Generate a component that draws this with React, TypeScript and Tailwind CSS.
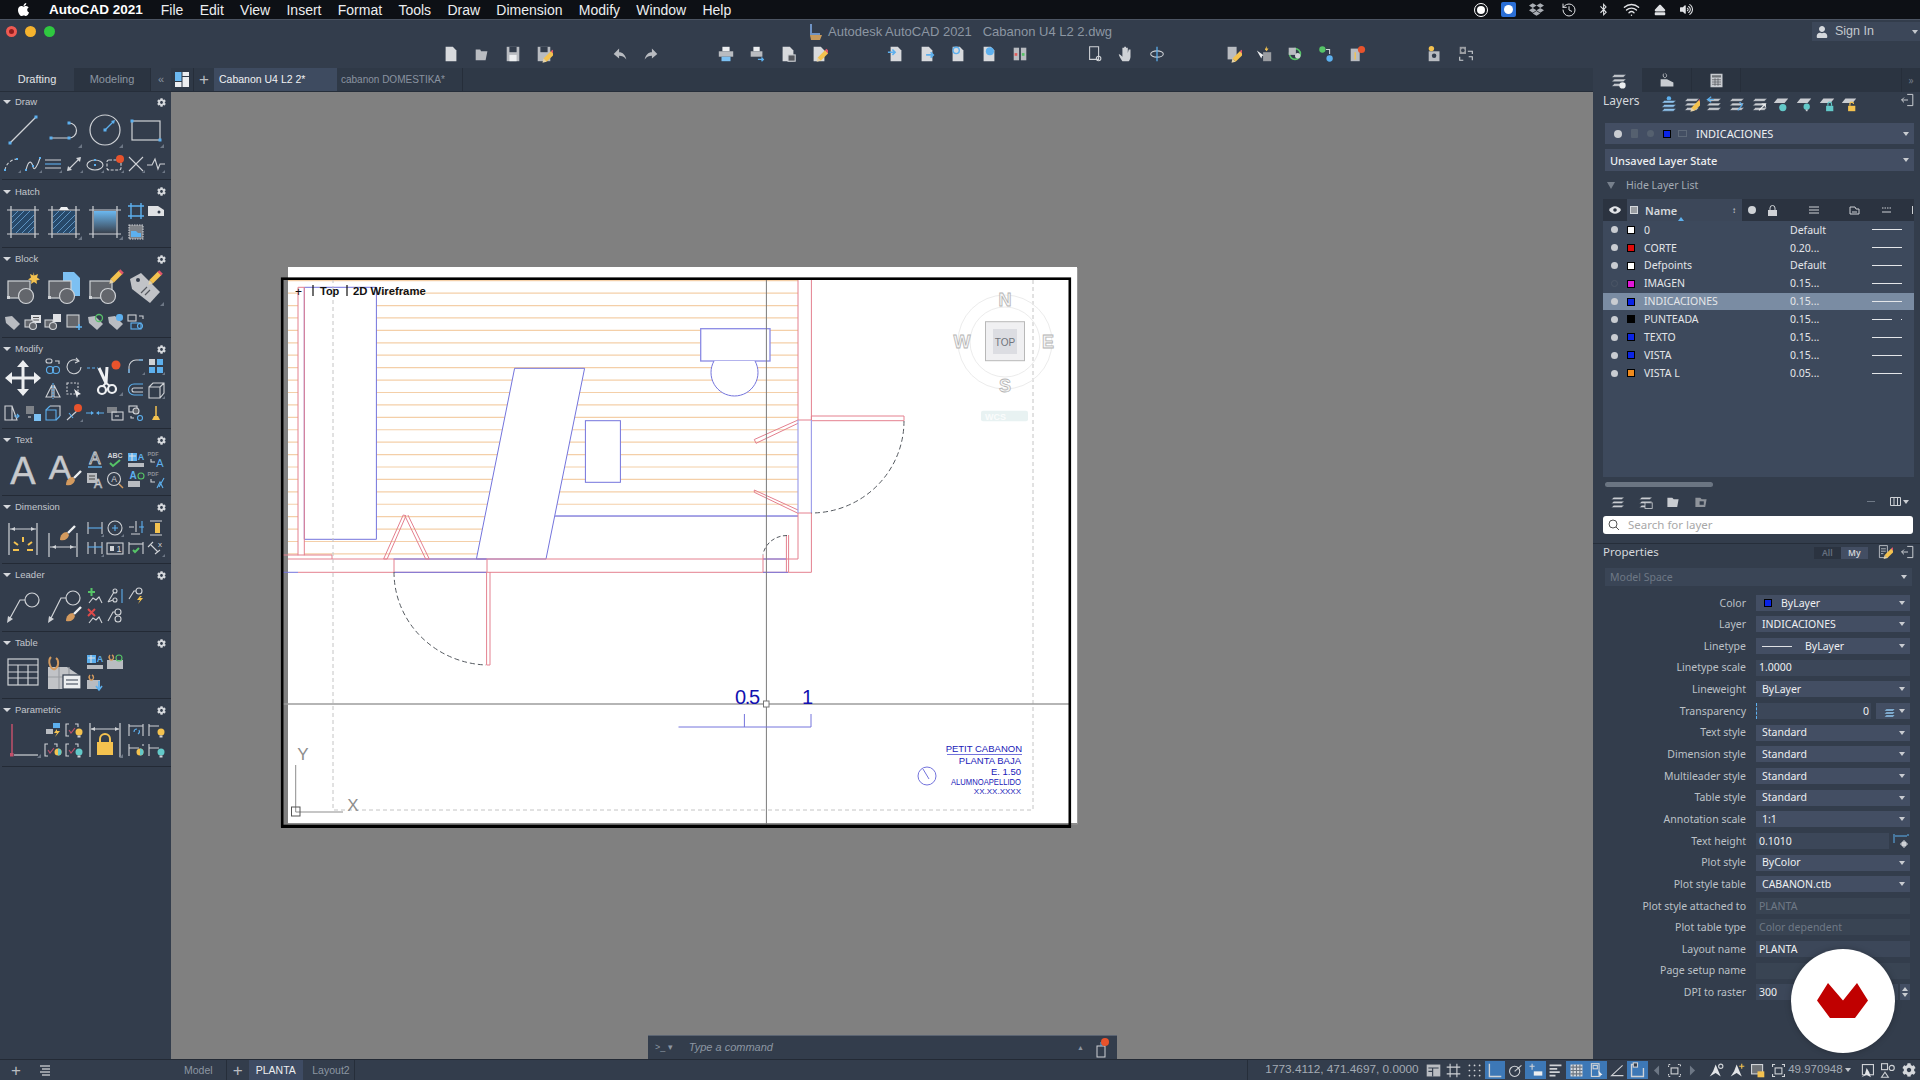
import React from 'react';
import { FaApple, FaDropbox, FaBluetoothB, FaEject, FaVolumeUp, FaCog, FaUser } from 'react-icons/fa';
import { History, Wifi } from 'lucide-react';

const W = '#cfd2d6';
const G = '#8b9098';
const B = '#5db0ee';
const R = '#e8532c';
const Y = '#f4c24f';
const O = '#d39a5e';

const dot = (x: number, y: number, s = 3) => <rect x={x - s / 2} y={y - s / 2} width={s} height={s} fill={B} stroke="none" />;
const badge = (x: number, y: number, r = 4) => <circle cx={x} cy={y} r={r} fill={R} stroke="none" />;

// 20px palette icon
const S = ({ children, f }: { children?: React.ReactNode; f?: boolean }) => (
  <span className="flex h-[20px] w-[20.6px] items-center justify-center">
    <svg width="20" height="20" viewBox="0 0 20 20" fill="none" stroke={W} strokeWidth="1.1" className="overflow-visible">
      {children}
      {f && <path d="M19 16v3h-3z" fill="#6d7785" stroke="none" />}
    </svg>
  </span>
);

// 36px palette icon
const L = ({ children, f, h = 'h-[36px]' }: { children?: React.ReactNode; f?: boolean; h?: string }) => (
  <span className={`flex w-[41.2px] items-center justify-center ${h}`}>
    <svg width="38" height="38" viewBox="0 0 38 38" fill="none" stroke={W} strokeWidth="1.2" className="overflow-visible">
      {children}
      {f && <path d="M37 33v4h-4z" fill="#6d7785" stroke="none" />}
    </svg>
  </span>
);

const Section = ({ title, h, head = 'h-[22px]', children }: { title: string; h: string; head?: string; children: React.ReactNode }) => (
  <section className={`border-b border-[#232a35] ${h}`}>
    <div className={`flex items-center pl-[1px] pr-[5px] ${head}`}>
      <span className="h-0 w-0 border-x-[4px] border-t-[4px] border-x-transparent border-t-[#d5d8dc]" />
      <span className="ml-[4px] text-[9.500px] leading-none text-[#c3c7cd]">{title}</span>
      <FaCog className="ml-auto text-[9px] text-[#d5d8dc]" />
    </div>
    {children}
  </section>
);

const Two = ({ children, cols = 'grid-cols-2 w-[41.2px]', gap = '' }: { children: React.ReactNode; cols?: string; gap?: string }) => (
  <div className={`grid ${cols} ${gap}`}>{children}</div>
);

const hatchSq = (
  <>
    <rect x="8" y="8" width="22" height="22" fill="#27496a" stroke="none" />
    <path d="M8 14l6-6M8 20l12-12M8 26l18-18M12 30l18-18M18 30l12-12M24 30l6-6" stroke="#5d92c0" strokeWidth="1" />
    <path d="M7 3v32M31 3v32M3 7h32M3 31h32" />
  </>
);

const blockBase = (
  <>
    <rect x="4" y="12" width="22" height="17" fill="#63666c" />
    <circle cx="22" cy="27" r="7.5" fill="#63666c" />
    <rect x="3" y="27" width="3" height="3" fill={W} stroke="none" />
  </>
);

const pencil = (x: number, y: number) => (
  <g transform={`translate(${x} ${y}) rotate(45)`}>
    <rect x="-2.5" y="-8" width="5" height="12" fill={Y} stroke="none" />
    <path d="M-2.5 4L0 8l2.5-4z" fill="#e6d3a8" stroke="none" />
    <rect x="-2.5" y="-10" width="5" height="2.5" fill="#e0566a" stroke="none" />
  </g>
);

const brush = (x: number, y: number) => (
  <g transform={`translate(${x} ${y})`}>
    <path d="M-7 7c0-5 3-8 7-8l2 3c-1 4-4 6-9 5z" fill={O} stroke="none" />
    <path d="M1 0l7-7" stroke="#eef0f2" strokeWidth="2.4" />
  </g>
);

const tag = (
  <path d="M3 5l7-1 8 8-6 6-8-7z" fill="#b9bcc1" stroke="none" />
);

const dimBars = <path d="M3 4v12M17 4v12" />;

const lamp = (c: string) => (
  <g>
    <circle cx="15" cy="12" r="3.5" fill={c} stroke="none" />
    <rect x="13.5" y="15.5" width="3" height="2" fill="#cfd2d6" stroke="none" />
  </g>
);

const geoBracket = (
  <>
    <path d="M5 4H2v12h3M11 4h3v3" />
    <path d="M5 10l2 3 4-5" stroke="#c2506a" />
  </>
);

const LeftPalette = () => (
  <div className="flex-1 pl-[2px]">
    <Section title="Draw" h="h-[88px]" head="h-[20px]">
      <div className="flex">
        <L>
          <line x1="6" y1="32" x2="32" y2="6" />
          {dot(6, 32)}
          {dot(32, 6)}
        </L>
        <L f>
          <path d="M6 27h18M24 27a7.500 7.500 0 0 0 0-15" />
          {dot(6, 27)}
          {dot(24, 27)}
          {dot(24, 12)}
        </L>
        <L f>
          <circle cx="19" cy="19" r="15" />
          <path d="M19 19l8-8" stroke={B} />
          {dot(19, 19)}
          <path d="M29 9l-4 1 3 3z" fill={B} stroke="none" />
        </L>
        <L f>
          <rect x="5" y="10" width="28" height="19" />
          {dot(5, 10)}
          {dot(33, 29)}
        </L>
      </div>
      <div className="mt-[6px] flex">
        <S f>
          <path d="M3 16a13 13 0 0 1 12-11" strokeDasharray="3 2" />
          {dot(3, 16, 2)}
          {dot(15, 5, 2)}
        </S>
        <S f>
          <path d="M3 16c3-12 6-8 7-3s5-2 7-9" />
          {dot(3, 16, 2)}
          {dot(10, 12, 2)}
          {dot(17, 4, 2)}
        </S>
        <S f>
          <path d="M2 6h16M2 14h16" />
          <path d="M2 10h16" stroke={B} />
        </S>
        <S f>
          <path d="M4 16L16 4" />
          <path d="M17 3l-5 1 4 4zM3 17l5-1-4-4z" fill={W} stroke="none" />
        </S>
        <S f>
          <ellipse cx="10" cy="11" rx="8" ry="5" />
          {dot(10, 6, 2)}
          {dot(10, 11, 2)}
        </S>
        <S f>
          <rect x="2" y="6" width="14" height="10" rx="2" strokeDasharray="3 1.500" />
          {badge(15, 5)}
        </S>
        <S f>
          <path d="M3 3l14 14M17 3L3 17" />
        </S>
        <S f>
          <path d="M1 11h5l3-6 3 10 2-5h5" />
        </S>
      </div>
    </Section>

    <Section title="Hatch" h="h-[68px]" head="h-[23px]">
      <div className="-mt-[2px] flex">
        <L h="h-[41px]">{hatchSq}</L>
        <L f h="h-[41px]">
          {hatchSq}
          <path d="M14 7l2-3h6l2 3z" fill="#eef0f2" stroke="none" />
        </L>
        <L f h="h-[41px]">
          <defs>
            <linearGradient id="grad" x1="0" y1="0" x2="0" y2="1">
              <stop offset="0" stopColor="#6bb8f0" />
              <stop offset="1" stopColor="#3a4350" />
            </linearGradient>
          </defs>
          <rect x="8" y="8" width="22" height="22" fill="url(#grad)" stroke="none" />
          <path d="M7 3v32M31 3v32M3 7h32M3 31h32" />
        </L>
        <Two gap="gap-y-[1px]">
          <S>
            <path d="M5 2v16M15 2v16M2 5h16M2 15h16" stroke={B} strokeWidth="1.4" />
          </S>
          <S>
            <path d="M2 5h10l6 4v6H2z" fill="#dfe1e4" stroke="none" />
            <circle cx="13" cy="11" r="1.500" fill="#333d4c" stroke="none" />
          </S>
          <S>
            <rect x="3" y="3" width="14" height="14" fill="#7e8288" stroke={W} strokeDasharray="1.500 1" />
            <path d="M5 9h5l2 2h3v4H5z" fill={B} stroke="none" />
          </S>
        </Two>
      </div>
    </Section>

    <Section title="Block" h="h-[90px]">
      <div className="flex">
        <L>
          {blockBase}
          <path d="M29 3l1.500 3.500 3.500-1.500-1 3.500 3 2-3.500 1 .5 3.500-3-2-3 2 .5-3.500-3.500-1 3-2-1-3.500 3.500 1.500z" fill={Y} stroke="none" />
        </L>
        <L>
          <path d="M18 3h11l6 6v18H18z" fill="#7cc0f2" stroke="none" />
          {blockBase}
        </L>
        <L>
          {blockBase}
          {pencil(29, 9)}
        </L>
        <L f>
          <path d="M3 10l11-6 19 19-10 11L5 20z" fill="#c1c3c7" stroke="none" />
          <circle cx="11" cy="11" r="2" fill="#333d4c" stroke="none" />
          <path d="M14 24l6-6M18 26l5-5" stroke="#55585e" />
          {pencil(27, 10)}
        </L>
      </div>
      <div className="mt-[6px] flex">
        <S>{tag}</S>
        <S>
          <rect x="8" y="3" width="10" height="8" fill="#dfe1e4" stroke="none" />
          <path d="M10 5.500h6M10 8h6" stroke="#555" />
          <rect x="2" y="8" width="8" height="7" fill="#63666c" />
          <circle cx="10" cy="14" r="3.500" fill="#63666c" />
        </S>
        <S>
          <rect x="10" y="2" width="8" height="8" fill="#dfe1e4" stroke="none" />
          <rect x="2" y="8" width="8" height="7" fill="#63666c" />
          <circle cx="10" cy="14" r="3.500" fill="#63666c" />
        </S>
        <S>
          <rect x="3" y="3" width="12" height="12" fill="#63666c" />
          <path d="M15 12v6M12 15h6" stroke={B} strokeWidth="1.600" />
        </S>
        <S>
          {tag}
          <circle cx="14" cy="6" r="3.500" stroke="#59c06a" strokeWidth="1.300" />
        </S>
        <S>
          {tag}
          <rect x="11" y="2" width="7" height="7" rx="3" fill={B} stroke="none" />
        </S>
        <S>
          <rect x="2" y="3" width="8" height="6" />
          <path d="M13 4h4v3" />
          <rect x="5" y="11" width="10" height="6" stroke={B} />
          <circle cx="14" cy="14" r="2.500" stroke={B} />
        </S>
      </div>
    </Section>

    <Section title="Modify" h="h-[91px]">
      <div className="-mt-[4px] flex">
        <L h="h-[44px]">
          <path d="M19 4v30M4 19h30" strokeWidth="3" stroke="#eceef0" />
          <path d="M19 1l6 7H13zM19 37l6-7H13zM1 19l7-6v12zM37 19l-7-6v12z" fill="#eceef0" stroke="none" />
        </L>
        <Two gap="gap-y-[4px]">
          <S>
            <rect x="3" y="3" width="6" height="4" rx="2" />
            <path d="M12 5h4v3" />
            <circle cx="7" cy="14" r="3.500" stroke={B} />
            <circle cx="13" cy="14" r="3.500" stroke={B} />
          </S>
          <S>
            <path d="M14 5a7 7 0 1 0 3 6" />
            <path d="M12 2l3 3-4 2" />
          </S>
          <S>
            <path d="M3 17L9 5v12zM11 5l6 12h-6z" />
            <path d="M10 3v16" strokeDasharray="2 1" stroke={B} />
          </S>
          <S>
            <rect x="3" y="3" width="11" height="11" strokeDasharray="2 1.500" />
            <path d="M10 9l7 5-3 1-1 3z" fill="#eceef0" stroke="none" />
          </S>
        </Two>
        <L f h="h-[44px]">
          <path d="M1 9h11" strokeDasharray="3 2" stroke={B} />
          <path d="M13 9l7 15M21 8l-1 16" stroke="#eef0f2" strokeWidth="3" />
          <circle cx="16" cy="31" r="4" stroke="#eef0f2" strokeWidth="2.200" />
          <circle cx="26" cy="30" r="4" stroke="#eef0f2" strokeWidth="2.200" />
          <path d="M20 24l-3 3M20 24l4 3" stroke="#eef0f2" strokeWidth="2" />
          {badge(30, 6, 4.500)}
        </L>
        <Two gap="gap-y-[4px]">
          <S f>
            <path d="M3 17V11a7 7 0 0 1 7-7h7" />
            <path d="M3 17V13M13 4h4" stroke={B} />
          </S>
          <S f>
            <rect x="3" y="3" width="6" height="6" fill={W} stroke="none" />
            <rect x="11" y="3" width="6" height="6" fill={B} stroke="none" />
            <rect x="3" y="11" width="6" height="6" fill={B} stroke="none" />
            <rect x="11" y="11" width="6" height="6" fill={B} stroke="none" />
          </S>
          <S>
            <path d="M17 4H8a5 5 0 0 0 0 11h9" stroke={B} />
            <path d="M17 8H8a2 2 0 0 0 0 4h9" />
          </S>
          <S f>
            <path d="M3 7h11v11H3zM3 7l4-4h11v10l-4 5M14 7l4-4" />
          </S>
        </Two>
      </div>
      <div className="mt-[3px] flex">
        <S>
          <path d="M3 3h7v14H3zM10 3l5 14H10" />
          <path d="M12 13h5m-2-2l2 2-2 2" stroke={B} />
        </S>
        <S>
          <rect x="3" y="3" width="8" height="8" fill="#7e8288" stroke="none" />
          <path d="M5 14h3" />
          <rect x="11" y="11" width="7" height="7" fill="#7cc0f2" stroke="none" />
        </S>
        <S>
          <path d="M3 7h10v10H3z" stroke={B} />
          <path d="M7 3h10v10" />
          <path d="M3 7l4-4M13 17l4-4" stroke={B} />
        </S>
        <S f>
          <path d="M3 17L14 7" />
          <path d="M5 10l4 5" stroke={B} />
          {badge(14, 5, 4)}
        </S>
        <S>
          <path d="M1 10h6M13 10h6" stroke={B} />
          <path d="M6 8l3 2-3 2zM14 8l-3 2 3 2z" fill={B} stroke="none" />
        </S>
        <S>
          <rect x="2" y="4" width="10" height="6" fill="#7e8288" stroke="none" />
          <rect x="7" y="9" width="11" height="8" />
          <path d="M10 13h4" />
        </S>
        <S>
          <rect x="3" y="3" width="8" height="6" />
          <circle cx="10" cy="8" r="3" fill="#63666c" />
          <path d="M5 13v2h3" />
          <circle cx="14" cy="15" r="2.500" stroke={B} />
        </S>
        <S>
          <path d="M10 3v10" stroke={Y} strokeWidth="1.500" />
          <path d="M6 17l2-4h4l2 4z" fill={Y} stroke="none" />
        </S>
      </div>
    </Section>

    <Section title="Text" h="h-[67px]">
      <div className="-mt-[1px] flex">
        <L h="h-[40px]">
          <text x="19" y="33" textAnchor="middle" fontSize="38" fill="#c7c9cc" stroke="#c7c9cc" strokeWidth=".5" fontFamily="Liberation Sans, sans-serif">A</text>
        </L>
        <L h="h-[40px]">
          <text x="15" y="28" textAnchor="middle" fontSize="34" fill="#c7c9cc" stroke="#c7c9cc" strokeWidth=".5" fontFamily="Liberation Sans, sans-serif">A</text>
          {brush(28, 27)}
        </L>
        <Two cols="grid-cols-4 w-[82.4px]">
          <S>
            <text x="10" y="14" textAnchor="middle" fontSize="17" fill="none" stroke={W} strokeWidth=".8" fontFamily="Liberation Sans, sans-serif">A</text>
            <path d="M3 17h14" stroke={B} strokeWidth="1.400" />
          </S>
          <S>
            <text x="10" y="8" textAnchor="middle" fontSize="7" fontWeight="bold" fill={W} stroke="none" fontFamily="Liberation Sans, sans-serif">ABC</text>
            <path d="M5 13l3 3 7-6" stroke="#56c467" strokeWidth="2" />
          </S>
          <S>
            <rect x="2" y="3" width="9" height="8" fill={B} stroke="none" />
            <path d="M3 6h7M6 3v8" stroke="#dfe1e4" />
            <text x="15" y="10" textAnchor="middle" fontSize="9" fill={B} stroke="none" fontWeight="bold" fontFamily="Liberation Sans, sans-serif">A</text>
            <rect x="2" y="13" width="16" height="4" fill="#b9bcc1" stroke="none" />
          </S>
          <S>
            <text x="7" y="6" textAnchor="middle" fontSize="5.500" fontWeight="bold" fill={G} stroke="none" fontFamily="Liberation Sans, sans-serif">PDF</text>
            <path d="M5 9v3h4" />
            <text x="14" y="17" textAnchor="middle" fontSize="11" fill={B} stroke="none" fontFamily="Liberation Sans, sans-serif">A</text>
          </S>
          <S>
            <rect x="2" y="3" width="10" height="10" fill="#b9bcc1" stroke="none" />
            <path d="M4 6h6M4 9h6" stroke="#444" />
            <text x="13" y="18" textAnchor="middle" fontSize="12" fill="#333d4c" stroke={W} strokeWidth=".7" fontFamily="Liberation Sans, sans-serif">A</text>
          </S>
          <S>
            <circle cx="9" cy="9" r="6.500" />
            <text x="9" y="12" textAnchor="middle" fontSize="8.500" fill={W} stroke="none" fontFamily="Liberation Sans, sans-serif">A</text>
            <path d="M14 14l4 4" stroke={O} strokeWidth="1.500" />
          </S>
          <S>
            <text x="7" y="9" textAnchor="middle" fontSize="10" fill={B} stroke="none" fontWeight="bold" fontFamily="Liberation Sans, sans-serif">A</text>
            <circle cx="15" cy="6" r="3" stroke="#56c467" />
            <rect x="2" y="11" width="12" height="6" fill="#b9bcc1" stroke="none" />
          </S>
          <S>
            <text x="7" y="6" textAnchor="middle" fontSize="5.500" fontWeight="bold" fill={G} stroke="none" fontFamily="Liberation Sans, sans-serif">PDF</text>
            <path d="M5 9v3h4" />
            <path d="M11 18l3-6 3 6M18 8l-5 9" stroke={B} />
          </S>
        </Two>
      </div>
    </Section>

    <Section title="Dimension" h="h-[68px]">
      <div className="flex">
        <L h="h-[40px]">
          <path d="M5 4v32M33 4v32M6 10h26" />
          <path d="M7 10l4-2v4zM31 10l-4-2v4z" fill={W} stroke="none" />
          <path d="M19 18v5M10 23l4 3M28 23l-4 3M9 31h6M23 31h6" stroke={Y} strokeWidth="2" />
        </L>
        <L h="h-[40px]">
          <path d="M4 14v24M32 14v24M5 28h26" />
          <path d="M7 28l4-2v4zM29 28l-4-2v4z" fill={W} stroke="none" />
          {brush(22, 14)}
        </L>
        <Two cols="grid-cols-4 w-[82.4px]">
          <S f>
            {dimBars}
            <path d="M3 10h14" stroke={B} />
          </S>
          <S f>
            <circle cx="10" cy="10" r="7" />
            <path d="M7 10h6M10 7v6" stroke={B} />
          </S>
          <S>
            <path d="M10 3v11M5 16h9M3 9h5" />
            <path d="M13 9h5M16 3v12" stroke={B} />
          </S>
          <S>
            <path d="M4 3h12M4 17h12" />
            <rect x="9" y="5" width="5" height="10" fill={Y} stroke="none" />
          </S>
          <S f>
            <path d="M3 4v12M10 4v12M17 4v12" />
            <path d="M3 9h14" stroke={B} />
          </S>
          <S>
            <rect x="2" y="5" width="16" height="11" />
            <path d="M5 8h4v5H5z" fill={W} stroke="none" />
            <text x="14" y="14" textAnchor="middle" fontSize="9" fill={W} stroke="none" fontFamily="Liberation Sans, sans-serif">1</text>
          </S>
          <S>
            {dimBars}
            <path d="M3 6h14" />
            <path d="M7 12l2 2 4-4" stroke="#56c467" strokeWidth="2" />
          </S>
          <S f>
            <path d="M2 9l5-5M9 16l5-4M5 7l7 7" />
            <text x="14" y="9" textAnchor="middle" fontSize="8" fill={W} stroke="none" fontFamily="Liberation Sans, sans-serif">x</text>
          </S>
        </Two>
      </div>
    </Section>

    <Section title="Leader" h="h-[68px]">
      <div className="flex">
        <L h="h-[40px]">
          <circle cx="28" cy="13" r="7" />
          <path d="M21 13h-5L5 33" />
          <path d="M3 36l1-7 5 3z" fill={W} stroke="none" />
        </L>
        <L h="h-[40px]">
          <circle cx="28" cy="11" r="7" />
          <path d="M21 11h-5L5 33" />
          <path d="M3 36l1-7 5 3z" fill={W} stroke="none" />
          {brush(28, 27)}
        </L>
        <Two cols="grid-cols-3 w-[61.8px]">
          <S>
            <path d="M3 6h7M6.500 2v8" stroke="#56c467" strokeWidth="2" />
            <path d="M4 17l4-5 3 2 3-3 3 6" />
          </S>
          <S>
            <path d="M17 3v14" stroke={B} />
            <circle cx="10" cy="5" r="2" />
            <circle cx="10" cy="14" r="2" />
            <path d="M3 16l6-10M3 16l5-2" />
          </S>
          <S>
            <circle cx="13" cy="5" r="3" />
            <path d="M10 5H8L3 13" />
            <path d="M14 10l-3 4h3l-2 4 5-6h-3l2-2z" fill={Y} stroke="none" />
          </S>
          <S>
            <path d="M3 3l7 7M10 3l-7 7" stroke="#dd4a4a" strokeWidth="2" />
            <path d="M4 17l4-5 3 2 3-3 3 6" />
          </S>
          <S>
            <circle cx="13" cy="6" r="3" />
            <circle cx="13" cy="13" r="3" />
            <path d="M10 6H8L3 15" />
          </S>
        </Two>
      </div>
    </Section>

    <Section title="Table" h="h-[67px]">
      <div className="-mt-[2px] flex">
        <L h="h-[40px]">
          <rect x="4" y="6" width="30" height="26" />
          <path d="M4 12h30M4 19h30M4 25h30M14 12v20M24 12v20" />
        </L>
        <L h="h-[40px]">
          <path d="M3 14l19 0 12 8v14H3z" fill="#c1c3c7" stroke="none" />
          <path d="M14 14v22M24 14v22M3 24h31" stroke="#9a9da2" />
          <path d="M6 4c-4 4 0 14 4 12s4-9 1-11" stroke={O} strokeWidth="2" />
          <rect x="18" y="22" width="18" height="14" fill="#eceef0" stroke="#333d4c" />
          <path d="M21 27h12M21 31h12" stroke="#333d4c" />
        </L>
        <Two cols="grid-cols-2 w-[41.2px]">
          <S>
            <rect x="2" y="3" width="9" height="8" fill={B} stroke="none" />
            <path d="M3 6h7M6 3v8" stroke="#dfe1e4" />
            <text x="15" y="10" textAnchor="middle" fontSize="9" fill={B} stroke="none" fontWeight="bold" fontFamily="Liberation Sans, sans-serif">A</text>
            <rect x="2" y="13" width="16" height="4" fill="#b9bcc1" stroke="none" />
          </S>
          <S>
            <path d="M2 8h16v9H2z" fill="#b9bcc1" stroke="none" />
            <path d="M5 3c-2 2 0 6 2 5s2-4 0-5" stroke={O} strokeWidth="1.400" />
            <circle cx="14" cy="6" r="3" stroke="#56c467" />
          </S>
          <S>
            <path d="M2 8h13v9H2z" fill="#b9bcc1" stroke="none" />
            <path d="M5 3c-2 2 0 6 2 5s2-4 0-5" stroke={O} strokeWidth="1.400" />
            <path d="M14 9v8m-3-3l3 4 3-4" stroke={B} strokeWidth="1.600" />
          </S>
        </Two>
      </div>
    </Section>

    <Section title="Parametric" h="h-[68px]">
      <div className="-mt-[1px] flex">
        <L f h="h-[40px]">
          <path d="M8 3v30" stroke="#c2506a" strokeWidth="1.500" />
          <path d="M10 34h24" />
          <rect x="6" y="32" width="3.500" height="3.500" fill="#c2506a" stroke="none" />
        </L>
        <Two gap="gap-y-0">
          <S>
            <rect x="10" y="3" width="7" height="5" fill={B} stroke="none" />
            <rect x="3" y="9" width="7" height="5" fill="#b9bcc1" stroke="none" />
            <path d="M14 9l-3 4h3l-2 4 5-6h-3z" fill={Y} stroke="none" />
          </S>
          <S>
            {geoBracket}
            {lamp(Y)}
          </S>
          <S>
            {geoBracket}
            <circle cx="15" cy="12" r="3.500" fill={Y} stroke="none" />
            <path d="M15 8.500a3.500 3.500 0 0 1 0 7z" fill="#63c9c9" stroke="none" />
          </S>
          <S>
            {geoBracket}
            {lamp('#63c9c9')}
          </S>
        </Two>
        <L f h="h-[40px]">
          <path d="M4 2v34M34 2v34M5 8h28" />
          <path d="M5 8l4-2v4zM33 8l-4-2v4z" fill={W} stroke="none" />
          <path d="M14 21v-3a5 5 0 0 1 10 0v3" stroke={Y} strokeWidth="2" />
          <rect x="11" y="21" width="16" height="13" fill={Y} stroke="none" />
        </L>
        <Two>
          <S>
            <path d="M3 4v12M17 4v12M3 6h14" />
            <path d="M8 12a3 3 0 0 1 3-3M12 14a3 3 0 0 0 1-4" stroke={B} />
          </S>
          <S>
            <path d="M3 4v12M3 6h10" />
            {lamp(Y)}
          </S>
          <S>
            <path d="M3 4v12M3 8h10M17 4v2" />
            <circle cx="14" cy="12" r="3.500" fill={Y} stroke="none" />
            <path d="M14 8.500a3.500 3.500 0 0 1 0 7z" fill="#63c9c9" stroke="none" />
          </S>
          <S>
            <path d="M3 4v12M3 8h10" />
            {lamp('#63c9c9')}
          </S>
        </Two>
      </div>
    </Section>
  </div>
);

const MenuBar = () => (
  <div className="flex h-[19px] shrink-0 items-center bg-[#0d1015] text-[14px] leading-none text-[#eceef0]">
    <FaApple className="ml-[16px] mr-[18px] text-[15px] text-white" />
    <span className="mr-[18px] text-[13.500px] font-bold text-white">AutoCAD 2021</span>
    <div className="flex gap-[16.300px]">
      {['File', 'Edit', 'View', 'Insert', 'Format', 'Tools', 'Draw', 'Dimension', 'Modify', 'Window', 'Help'].map((m) => (
        <span key={m}>{m}</span>
      ))}
    </div>
    <div className="ml-[743px] flex items-center gap-[13px] text-[#dfe1e4]">
      <span className="flex h-[14px] w-[14px] items-center justify-center rounded-full border border-white">
        <span className="h-[8px] w-[8px] rounded-full bg-white" />
      </span>
      <span className="flex h-[15px] w-[15px] items-center justify-center rounded-[2px] bg-[#2b6fd6]">
        <span className="h-[9px] w-[9px] rounded-full bg-white" />
      </span>
      <FaDropbox className="text-[15px] text-[#a9adb3]" />
      <History size={16} strokeWidth={1.500} className="ml-[4px]" />
      <FaBluetoothB className="ml-[7px] text-[13px]" />
      <Wifi size={17} />
      <FaEject className="ml-[1px] text-[12px]" />
      <FaVolumeUp className="ml-[1px] text-[13px]" />
    </div>
  </div>
);

const T = ({ children }: { children: React.ReactNode }) => (
  <span className="flex h-[20px] w-[31px] items-center justify-center">
    <svg width="18" height="18" viewBox="0 0 20 20" fill="none" stroke={W} strokeWidth="1.200">
      {children}
    </svg>
  </span>
);

const docPath = <path d="M4 2h8l4 4v12H4z" fill="#d8dadd" stroke="none" />;

const TitleBar = () => (
  <div className="h-[49px] shrink-0 bg-[#333d4c]">
    <div className="flex h-[24px] items-center border-t border-[#4c5563]">
      <div className="ml-[6px] flex gap-[8px]">
        <span className="h-[11px] w-[11px] rounded-full border-[3px] border-[#ef5a52] bg-[#8f1d1d]" />
        <span className="h-[11px] w-[11px] rounded-full bg-[#f5b32e]" />
        <span className="h-[11px] w-[11px] rounded-full bg-[#2fc840]" />
      </div>
      <svg width="14" height="18" viewBox="0 0 14 18" className="ml-[754px]">
        <path d="M2 1v10l9 0" stroke="#6f93c4" strokeWidth="2" fill="none" />
        <path d="M1 12h12l-2 5H2z" fill="#c79a5d" />
      </svg>
      <span className="ml-[5px] text-[13px] leading-none text-[#8c96a2]">Autodesk AutoCAD 2021&nbsp;&nbsp;&nbsp;Cabanon U4 L2 2.dwg</span>
      <div className="ml-auto flex h-[19px] w-[108px] items-center bg-[#3c4759] pl-[4px] text-[12.500px] leading-none text-[#c3c7cd]">
        <FaUser className="text-[12px] text-[#d5d8dc]" />
        <span className="ml-[7px]">Sign In</span>
        <span className="ml-auto mr-[2px] h-0 w-0 border-x-[3px] border-t-[4px] border-x-transparent border-t-[#c3c7cd]" />
      </div>
    </div>
    <div className="-mt-[2px] flex h-[25px] items-center pl-[435px]">
      <T>{docPath}</T>
      <T>
        <path d="M3 5h5l1 2h7l-2 10H3z" fill="#b9bcc1" stroke="none" />
      </T>
      <T>
        <path d="M3 2h14v16H3z" fill="#b9bcc1" stroke="none" />
        <rect x="6" y="2" width="8" height="6" fill="#333d4c" stroke="none" />
        <rect x="6" y="11" width="8" height="7" fill="#eceef0" stroke="none" />
      </T>
      <T>
        <path d="M3 2h14v16H3z" fill="#b9bcc1" stroke="none" />
        <rect x="6" y="2" width="8" height="6" fill="#333d4c" stroke="none" />
        {pencil(14, 14)}
      </T>
      <span className="ml-[45px]" />
      <T>
        <path d="M9 4L3 10l6 5v-3c3 0 6 1 8 4-1-5-4-8-8-8z" fill="#b9bcc1" stroke="none" />
      </T>
      <T>
        <path d="M11 4l6 6-6 5v-3c-3 0-6 1-8 4 1-5 4-8 8-8z" fill="#b9bcc1" stroke="none" />
      </T>
      <span className="ml-[44px]" />
      <T>
        <rect x="6" y="2" width="8" height="5" fill="#eceef0" stroke="none" />
        <rect x="2" y="7" width="16" height="6" fill="#b9bcc1" stroke="none" />
        <rect x="5" y="13" width="10" height="5" fill="#7cc0f2" stroke="none" />
      </T>
      <T>
        <rect x="6" y="2" width="7" height="5" fill="#eceef0" stroke="none" />
        <rect x="3" y="7" width="13" height="6" fill="#b9bcc1" stroke="none" />
        <path d="M11 16h6m-2-2l2 2-2 2" stroke={B} strokeWidth="1.500" />
      </T>
      <T>
        {docPath}
        <rect x="10" y="11" width="8" height="7" fill="#55585e" stroke={W} />
      </T>
      <T>
        {docPath}
        {pencil(13, 13)}
      </T>
      <span className="ml-[46px]" />
      <T>
        {docPath}
        <path d="M1 8h8m-3-3l3 3-3 3" stroke={B} strokeWidth="1.800" />
      </T>
      <T>
        {docPath}
        <path d="M9 11h8m-3-3l3 3-3 3" stroke={B} strokeWidth="1.800" />
      </T>
      <T>
        {docPath}
        <circle cx="8" cy="6" r="3.500" stroke={B} strokeWidth="1.500" />
      </T>
      <T>
        {docPath}
        <circle cx="11" cy="7" r="4.500" fill={B} stroke="none" />
      </T>
      <T>
        <rect x="3" y="3" width="6" height="14" fill="#b9bcc1" stroke="none" />
        <rect x="11" y="3" width="6" height="14" fill="#b9bcc1" stroke="none" />
        <rect x="4" y="9" width="3" height="3" fill="#e25b5b" stroke="none" />
        <rect x="12" y="9" width="3" height="3" fill="#56c467" stroke="none" />
      </T>
      <span className="ml-[44px]" />
      <T>
        <path d="M4 2h10v14H4z" />
        <circle cx="14" cy="15" r="2.500" />
      </T>
      <T>
        <path d="M6 18c-2-3-4-6-4-8l2 1 2 2V3h2v6V2h2v7V3h2v6l1-4h2v8c0 2-1 4-2 5z" fill="#cfd2d6" stroke="none" />
      </T>
      <T>
        <ellipse cx="10" cy="10" rx="7" ry="3.500" />
        <path d="M10 2v16" stroke={B} strokeWidth="1.400" />
      </T>
      <span className="ml-[45px]" />
      <T>
        <path d="M4 2h10v14H4z" fill="#b9bcc1" stroke="none" />
        {pencil(14, 14)}
      </T>
      <T>
        <path d="M2 6l5 9 1-3 4 1z" fill="#eceef0" stroke="none" />
        <rect x="9" y="8" width="9" height="10" fill="#9a9da2" stroke="none" />
        <path d="M11 5l2-4v3h2l-2 3z" fill={Y} stroke="none" />
      </T>
      <T>
        <circle cx="10" cy="10" r="6" stroke="#56c467" strokeWidth="1.800" />
        <rect x="3" y="3" width="8" height="8" fill="#b9bcc1" stroke="none" />
        <circle cx="13" cy="12" r="3" fill={W} stroke="none" />
      </T>
      <T>
        <circle cx="6" cy="5" r="3.500" fill="#56c467" stroke="none" />
        <circle cx="14" cy="15" r="3.500" fill={B} stroke="none" />
        <path d="M10 5h4v5" stroke={W} />
      </T>
      <T>
        <rect x="3" y="4" width="10" height="14" fill="#b9bcc1" stroke="none" />
        <path d="M8 8v8" stroke={Y} strokeWidth="1.500" />
        {badge(15, 5, 4)}
      </T>
      <span className="ml-[47px]" />
      <T>
        <rect x="3" y="7" width="12" height="11" fill="#b9bcc1" stroke="none" />
        <circle cx="9" cy="12" r="2.500" fill="#333d4c" stroke="none" />
        <circle cx="6" cy="4" r="3" fill={Y} stroke="none" />
      </T>
      <T>
        <rect x="3" y="2" width="7" height="8" fill="#9a9da2" stroke="none" />
        <circle cx="6.500" cy="6" r="2" fill="#333d4c" stroke="none" />
        <path d="M3 13v4h4M13 13h4v4M12 7h5v3" stroke={W} />
      </T>
    </div>
  </div>
);

const PlanCanvas = () => {
  const hatch = Array.from({ length: 23 }, (_, i) => 280.7 + i * 12.42);
  const red = '#e4808f';
  const blue = '#7474dc';
  const dash = '#555a60';
  const txt = 'Liberation Sans, sans-serif';
  return (
    <svg viewBox="171 92 1422 967" className="absolute inset-0 h-full w-full" fill="none" strokeWidth="1">
      <rect x="288" y="267" width="789" height="556" fill="#ffffff" />
      <path d="M1077.500 268v556H288" stroke="#999999" strokeWidth="1" />
      {hatch.map((y) => (
        <line key={y} x1="288" y1={y} x2="798" y2={y} stroke="#f4cfa8" strokeWidth="1.200" />
      ))}
      <rect x="298" y="287" width="78.500" height="252" fill="#ffffff" />
      <rect x="298" y="539.500" width="6" height="16" fill="#ffffff" />
      <rect x="540" y="516.500" width="258" height="42" fill="#ffffff" />
      <path d="M476.400 559l38.200-190.700h70L546 559z" fill="#ffffff" stroke={blue} />
      <rect x="585.400" y="420.700" width="35" height="61.600" fill="#ffffff" stroke={blue} />
      <rect x="700.700" y="328.700" width="69.300" height="32.300" fill="#ffffff" stroke="#8a8ae4" strokeWidth="1.300" />
      <path d="M714 361a23.500 23.500 0 1 0 41 0" fill="#ffffff" stroke={blue} />
      <path d="M304.300 287.300v252h72.100v-252z" stroke={blue} />
      <path d="M555 516h243" stroke="#8a8ae4" strokeWidth="1.300" />

      {/* walls */}
      <path d="M298 287.300v268M304.300 287.300v268M298 287.300h6.300M282.500 555H332v4" stroke={red} />
      <path d="M288 559h510M798 279v141M798 513v46M811.400 279v141M811.400 513v59.300M298 572.300h513.400" stroke={red} />
      <path d="M393.600 559h93M763 559h23" stroke={blue} />
      <path d="M283 572.300h15M394 572.300h93M763 572.300h25" stroke={blue} />
      <path d="M383.600 559l19.600-44 2.800.7L387.100 559zM407.900 515l21.400 44h-3.600L405 516" stroke={red} />
      <path d="M754.300 439.500L798 420M756 443.300l42-20M754.300 439.500l1.700 3.800M754.300 490l43.700 20M754.300 492.300l43.700 21M754.300 490v2.300M798 420h13.400M798 513h13.400M811.400 416h92.600v4.700h-92.600z" stroke={red} />
      <path d="M798 420v93M811.400 420v93" stroke="#a0a0ea" strokeWidth="1.200" />
      <path d="M904 421a93 92 0 0 1-92.600 92" stroke={dash} strokeDasharray="5 3" />
      <path d="M786.400 535v37M788.600 535v37M763 555v17M394 559v13M487 559v13" stroke={red} />
      <path d="M787 535.500c-12 0-22 8-24 19" stroke={dash} strokeDasharray="4 2.500" />
      <path d="M486.600 572v93M490 572v93M486.600 665H490" stroke={red} />
      <path d="M394 572a96 93 0 0 0 92 93" stroke={dash} strokeDasharray="5 3" />

      {/* margin */}
      <path d="M333 279v531h700V279" stroke="#c4c4c4" strokeDasharray="4 3" />

      {/* crosshair */}
      <path d="M766.400 279v547" stroke="#7a7a7a" />
      <path d="M283 704h786" stroke="#9c9c9c" strokeWidth="1.500" />
      <rect x="763.500" y="701" width="5.500" height="6" fill="#ffffff" stroke="#777777" />

      {/* scale */}
      <path d="M678.500 727h132.500M744.400 714v13M811 714v13" stroke={blue} />
      <text x="735" y="704" fontSize="20" fill="#1111b0" fontFamily={txt} textLength="25">0.5</text>
      <text x="802" y="704" fontSize="20" fill="#1111b0" fontFamily={txt}>1</text>
      <text x="1022" y="752" fontSize="9.500" fill="#2020b8" textAnchor="end" fontFamily={txt}>PETIT CABANON</text>
      <path d="M947 754.500h75" stroke={blue} />
      <text x="1021" y="763.500" fontSize="9.500" fill="#2020b8" textAnchor="end" fontFamily={txt}>PLANTA BAJA</text>
      <text x="1021" y="775" fontSize="9.500" fill="#2020b8" textAnchor="end" fontFamily={txt}>E. 1.50</text>
      <text x="1021" y="784.500" fontSize="8.500" fill="#2020b8" textAnchor="end" fontFamily={txt} textLength="70" lengthAdjust="spacingAndGlyphs">ALUMNOAPELLIDO</text>
      <text x="1021" y="794" fontSize="8" fill="#2020b8" textAnchor="end" fontFamily={txt}>XX.XX.XXXX</text>
      <circle cx="927" cy="776" r="9" stroke={blue} />
      <path d="M923 769l6 10" stroke={blue} />

      {/* UCS icon */}
      <path d="M295.700 765v47h47.300" stroke="#8d8d8d" />
      <rect x="291.500" y="807" width="8.500" height="9" stroke="#555555" />
      <text x="303" y="760" fontSize="17" fill="#8d8d8d" textAnchor="middle" fontFamily={txt}>Y</text>
      <text x="353" y="811" fontSize="17" fill="#8d8d8d" textAnchor="middle" fontFamily={txt}>X</text>

      {/* view cube */}
      <circle cx="1005" cy="342" r="47" stroke="#ececec" />
      <circle cx="1005" cy="342" r="35" stroke="#ececec" />
      <rect x="985.500" y="321.700" width="39" height="39" fill="#f0f0f2" stroke="#b8b8b8" />
      <rect x="993" y="329" width="24" height="25" fill="#dcdde2" />
      <text x="1005" y="346" fontSize="10" fill="#70757c" textAnchor="middle" fontFamily={txt}>TOP</text>
      <text x="1005" y="306" fontSize="18" fontWeight="bold" fill="#f6f6f6" stroke="#b4b4b4" strokeWidth=".8" textAnchor="middle" fontFamily={txt}>N</text>
      <text x="1005" y="392" fontSize="18" fontWeight="bold" fill="#f6f6f6" stroke="#b4b4b4" strokeWidth=".8" textAnchor="middle" fontFamily={txt}>S</text>
      <text x="962" y="348" fontSize="18" fontWeight="bold" fill="#f6f6f6" stroke="#b4b4b4" strokeWidth=".8" textAnchor="middle" fontFamily={txt}>W</text>
      <text x="1048" y="348" fontSize="18" fontWeight="bold" fill="#f6f6f6" stroke="#b4b4b4" strokeWidth=".8" textAnchor="middle" fontFamily={txt}>E</text>
      <rect x="981" y="410.700" width="47" height="10.600" rx="2" fill="#e8f2f2" />
      <text x="985" y="419.500" fontSize="9" fontWeight="bold" fill="#fafcfc" fontFamily={txt}>WCS</text>

      {/* viewport frame */}
      <rect x="282.200" y="278.700" width="787.600" height="547.300" stroke="#000000" strokeWidth="2.600" />
      <path d="M281 827.200h790" stroke="#000000" strokeWidth="1.500" />

      {/* viewport label */}
      <text x="295" y="296" fontSize="12" fill="#111111" fontFamily={txt}>+</text>
      <path d="M313 285v11M347 285v11" stroke="#111111" strokeWidth="1.200" />
      <text x="320" y="295" fontSize="11" fontWeight="bold" fill="#111111" fontFamily={txt}>Top</text>
      <text x="353" y="295" fontSize="11.300" fontWeight="bold" fill="#111111" fontFamily={txt}>2D Wireframe</text>
    </svg>
  );
};

const CommandLine = () => (
  <div className="absolute bottom-0 left-[477px] flex h-[24px] w-[469px] items-center border-t border-[#5b6472] bg-[#333d4c] text-[#8c96a2]">
    <span className="ml-[7px] text-[9px] leading-none">&gt;_ ▾</span>
    <span className="ml-[16px] font-['Liberation_Sans',sans-serif] text-[11px] italic leading-none">Type a command</span>
    <span className="ml-auto text-[7px] leading-none">▲</span>
    <svg width="16" height="22" viewBox="0 0 16 22" fill="none" stroke={W} className="ml-[10px] mr-[7px] overflow-visible">
      <rect x="3" y="9" width="8" height="11" />
      <path d="M7 9V5" stroke={B} />
      {badge(11, 5, 4)}
    </svg>
  </div>
);

const SI = ({ children, on, narrow }: { children: React.ReactNode; on?: boolean; narrow?: boolean }) => (
  <span className={`flex h-[18px] items-center justify-center ${narrow ? 'w-[18px]' : 'w-[20.400px]'} ${on ? 'bg-[#3d78b6]' : ''}`}>
    <svg width="17" height="17" viewBox="0 0 20 20" fill="none" stroke={W} strokeWidth="1.300">
      {children}
    </svg>
  </span>
);

const StatusBar = () => (
  <div className="flex h-[21px] shrink-0 items-center border-t border-[#232a35] bg-[#333d4c] text-[#8c96a2]">
    <div className="flex h-full w-[57px] items-center justify-center border-r border-[#262e3a] text-[10.500px] leading-none">Model</div>
    <div className="flex h-full w-[23px] items-center justify-center border-r-0 text-[17px] font-light leading-none text-[#b9bcc1]">+</div>
    <div className="flex h-full w-[55px] items-center justify-center bg-[#3e4b63] text-[10.500px] leading-none text-[#eceef0]">PLANTA</div>
    <div className="flex h-full w-[54px] items-center justify-center border-r border-[#262e3a] pl-[5px] text-[10.500px] leading-none">Layout2</div>
    <div className="ml-[892px] flex h-full items-center border-l border-[#262e3a] pl-[17px] text-[11.800px] leading-none text-[#a4abb4]">
      <span className="w-[158px] whitespace-nowrap">1773.4112, 471.4697, 0.0000</span>
      <SI>
        <rect x="2" y="3" width="16" height="14" fill="#b9bcc1" stroke="none" />
        <path d="M4 7h12M4 11h5M9 7v10" stroke="#333d4c" />
      </SI>
      <SI>
        <path d="M6 2v16M14 2v16M2 6h16M2 14h16" />
      </SI>
      <SI>
        <path d="M4 4h.1M10 4h.1M16 4h.1M4 10h.1M10 10h.1M16 10h.1M4 16h.1M10 16h.1M16 16h.1" strokeWidth="2" strokeLinecap="round" />
      </SI>
      <SI on>
        <path d="M4 2v15h14" strokeWidth="1.600" />
      </SI>
      <SI>
        <circle cx="9" cy="11" r="6" />
        <path d="M9 11l8-7" />
      </SI>
      <SI on>
        <path d="M6 2v7M3 5h6" />
        <rect x="8" y="11" width="10" height="5" fill="#eceef0" stroke="none" />
      </SI>
      <SI>
        <path d="M3 4h14M3 8h9M3 12h12M3 16h7" strokeWidth="2" />
      </SI>
      <SI on>
        <rect x="3" y="3" width="14" height="14" fill="#d5d8dc" stroke="none" />
        <path d="M3 6h14M3 10h14M3 14h14M6 3v14M10 3v14M14 3v14" stroke="#6a7480" />
      </SI>
      <SI on>
        <rect x="4" y="2" width="9" height="15" />
        <rect x="6" y="4" width="5" height="4" />
        <path d="M12 10l5 5-2 .5-1 2.500z" fill="#eceef0" stroke="none" />
      </SI>
      <SI>
        <path d="M16 4L3 16h14" />
      </SI>
      <SI on>
        <path d="M7 3H3v14h14V7" strokeWidth="1.600" />
        <rect x="5" y="1" width="5" height="5" fill="#333d4c" />
      </SI>
      <SI narrow>
        <path d="M13 4l-6 6 6 6z" fill="#6d7785" stroke="none" />
      </SI>
      <SI narrow>
        <path d="M3 6V3h3M14 3h3v3M3 14v3h3M17 14v3h-3" strokeDasharray="2 1" />
        <rect x="6" y="7" width="8" height="7" />
      </SI>
      <SI narrow>
        <path d="M7 4l6 6-6 6z" fill="#6d7785" stroke="none" />
      </SI>
      <span className="w-[5px]" />
      <SI>
        <path d="M9 3L6 11l-4 6 7-4 6 4-3-7z" fill="#e2e4e7" stroke="none" />
        <circle cx="15" cy="5" r="2.500" />
      </SI>
      <SI>
        <path d="M9 3L6 11l-4 6 7-4 6 4-3-7z" fill="#e2e4e7" stroke="none" />
        <path d="M15 2v6M12 5h6" stroke={Y} />
      </SI>
      <SI>
        <rect x="3" y="3" width="13" height="11" fill="#6f7378" />
        <rect x="10" y="11" width="8" height="7" fill={Y} stroke="none" />
      </SI>
      <SI>
        <path d="M3 6V3h3M14 3h3v3M3 14v3h3M17 14v3h-3" />
        <rect x="6" y="7" width="8" height="7" />
      </SI>
      <span className="w-[54px] whitespace-nowrap text-[11.500px]">49.970948</span>
      <span className="ml-[3px] h-0 w-0 border-x-[3px] border-t-[4px] border-x-transparent border-t-[#c3c7cd]" />
      <span className="ml-[6px]" />
      <SI>
        <rect x="4" y="3" width="13" height="12" />
        <path d="M9 7L7 14l-4 4 6-3 5 3-2-6z" fill="#e2e4e7" stroke="none" />
      </SI>
      <SI>
        <rect x="3" y="2" width="7" height="7" />
        <circle cx="15" cy="7" r="3" />
        <path d="M7 12l-4 6h8z" />
      </SI>
      <span className="flex w-[22px] justify-center text-[14px] text-[#d5d8dc]">
        <FaCog />
      </span>
    </div>
  </div>
);

const LeftPanel = () => (
  <div className="flex w-[171px] shrink-0 flex-col bg-[#333d4c]">
    <div className="flex h-[24px] shrink-0 items-center border-b border-[#262e3a] bg-[#2b3441] text-[11px] leading-none">
      <div className="flex h-full w-[74px] items-center justify-center bg-[#333d4c] text-[#e2e4e7]">Drafting</div>
      <div className="flex h-full w-[76px] items-center justify-center text-[#8c96a2]">Modeling</div>
      <div className="flex h-full flex-1 items-center justify-center border-l border-[#262e3a] bg-[#333d4c] text-[#8c96a2]">«</div>
    </div>
    <LeftPalette />
    <div className="flex h-[21px] shrink-0 items-center border-t border-[#232a35] pl-[11px] text-[#b9bcc1]">
      <span className="text-[17px] font-light leading-none">+</span>
      <svg width="14" height="14" viewBox="0 0 14 14" className="ml-[17px]" stroke="#b9bcc1" fill="none">
        <path d="M2 3h10M4 6h8M2 9h10M4 12h8" strokeWidth="1.400" />
      </svg>
    </div>
  </div>
);

const DocTabs = () => (
  <div className="flex h-[24px] shrink-0 items-center border-b border-[#262e3a] bg-[#2f3947] font-['Liberation_Sans',sans-serif] text-[10.500px] leading-none">
    <div className="flex h-full w-[23px] items-center justify-center border-r border-[#262e3a]">
      <svg width="14" height="15" viewBox="0 0 14 15">
        <rect x="0" y="0" width="6.500" height="9" fill="#6bb8f0" />
        <rect x="7.500" y="0" width="6.500" height="4" fill="#eceef0" />
        <rect x="0" y="10" width="6.500" height="5" fill="#eceef0" />
        <rect x="7.500" y="5" width="6.500" height="10" fill="#eceef0" />
      </svg>
    </div>
    <div className="flex h-full w-[20px] items-center justify-center text-[17px] font-light text-[#b9bcc1]">+</div>
    <div className="flex h-full w-[123px] items-center bg-[#3e4b60] pl-[5px] text-[#f0f1f3]">Cabanon U4 L2 2*</div>
    <div className="flex h-full w-[126px] items-center border-r border-[#262e3a] pl-[4px] text-[10px] text-[#8a93a0]">cabanon DOMESTIKA*</div>
  </div>
);

const layers = [
  { n: '0', c: '#ffffff', w: 'Default' },
  { n: 'CORTE', c: '#e00b0b', w: '0.20...' },
  { n: 'Defpoints', c: '#ffffff', w: 'Default' },
  { n: 'IMAGEN', c: '#e116d8', w: '0.15...', off: true },
  { n: 'INDICACIONES', c: '#0a24e6', w: '0.15...', sel: true },
  { n: 'PUNTEADA', c: '#000000', w: '0.15...', dash: true },
  { n: 'TEXTO', c: '#0a24e6', w: '0.15...' },
  { n: 'VISTA', c: '#0a24e6', w: '0.15...' },
  { n: 'VISTA L', c: '#f08a1c', w: '0.05...' },
];

const Arrow = () => <span className="ml-auto mr-[5px] h-0 w-0 border-x-[3px] border-t-[4px] border-x-transparent border-t-[#c9ccd1]" />;

const LI = ({ children, w = 'w-[22.700px]' }: { children: React.ReactNode; w?: string }) => (
  <span className={`flex h-[18px] items-center justify-center ${w}`}>
    <svg width="18" height="18" viewBox="0 0 20 20" fill="none" stroke={W} strokeWidth="1.300">
      {children}
    </svg>
  </span>
);

const stack = (
  <path d="M6 4h13l-3 3H3zM6 9h13l-3 3H3zM6 14h13l-3 3H3z" fill="#c9ccd1" stroke="#333d4c" strokeWidth=".6" />
);
const stackB = (
  <path d="M6 6h13l-3 3H3zM6 10.500h13l-3 3H3zM6 15h13l-3 3H3z" fill="#8fc2ec" stroke="#333d4c" strokeWidth=".6" />
);
const sheet = <path d="M6 4h12l-4 5H2z" fill="#c9ccd1" stroke="none" />;

const pin = (
  <svg width="16" height="16" viewBox="0 0 20 20" fill="none" stroke={W} strokeWidth="1.200">
    <path d="M9 3h7v14H9" />
    <path d="M2 10h8M5 7l-3 3 3 3" />
  </svg>
);

const propRows: { l: string; v: string; k?: string }[] = [
  { l: 'Color', v: 'ByLayer', k: 'color' },
  { l: 'Layer', v: 'INDICACIONES' },
  { l: 'Linetype', v: 'ByLayer', k: 'ltype' },
  { l: 'Linetype scale', v: '1.0000', k: 'input' },
  { l: 'Lineweight', v: 'ByLayer' },
  { l: 'Transparency', v: '0', k: 'trans' },
  { l: 'Text style', v: 'Standard' },
  { l: 'Dimension style', v: 'Standard' },
  { l: 'Multileader style', v: 'Standard' },
  { l: 'Table style', v: 'Standard' },
  { l: 'Annotation scale', v: '1:1' },
  { l: 'Text height', v: '0.1010', k: 'height' },
  { l: 'Plot style', v: 'ByColor' },
  { l: 'Plot style table', v: 'CABANON.ctb' },
  { l: 'Plot style attached to', v: 'PLANTA', k: 'off' },
  { l: 'Plot table type', v: 'Color dependent', k: 'off' },
  { l: 'Layout name', v: 'PLANTA', k: 'input' },
  { l: 'Page setup name', v: '', k: 'off' },
  { l: 'DPI to raster', v: '300', k: 'dpi' },
];

const PropValue = ({ v, k }: { v: string; k?: string }) => {
  const box = 'flex h-[16px] items-center text-[#eef0f2]';
  if (k === 'trans')
    return (
      <div className="flex w-[154px] gap-[5px]">
        <div className={`${box} w-[115px] justify-end border-l border-dashed border-l-[#5db0ee] bg-[#3c4759] pr-[2px]`}>{v}</div>
        <div className={`${box} flex-1 bg-[#434e63] pl-[6px]`}>
          <svg width="14" height="12" viewBox="0 0 20 18">{stackB}</svg>
          <Arrow />
        </div>
      </div>
    );
  if (k === 'height')
    return (
      <div className="flex w-[154px]">
        <div className={`${box} w-[133px] bg-[#3c4759] pl-[3px]`}>{v}</div>
        <svg width="16" height="16" viewBox="0 0 16 16" className="ml-[4px]" fill="none" stroke={W}>
          <path d="M1 1v9M15 1v2M2 3h12" stroke={B} />
          <path d="M11 7v8M7 11h8M9 9h4v4H9z" fill="#c9ccd1" />
        </svg>
      </div>
    );
  if (k === 'dpi')
    return (
      <div className="flex w-[154px]">
        <div className={`${box} w-[142px] bg-[#3c4759] pl-[3px]`}>{v}</div>
        <div className="ml-[2px] flex h-[16px] w-[10px] flex-col items-center justify-center gap-[2px] bg-[#434e63]">
          <span className="h-0 w-0 border-x-[3px] border-b-[4px] border-x-transparent border-b-[#c9ccd1]" />
          <span className="h-0 w-0 border-x-[3px] border-t-[4px] border-x-transparent border-t-[#c9ccd1]" />
        </div>
      </div>
    );
  if (k === 'off') return <div className="flex h-[16px] w-[154px] items-center bg-[#394453] pl-[3px] text-[#6f7986]">{v}</div>;
  if (k === 'input') return <div className={`${box} w-[154px] bg-[#3c4759] pl-[3px]`}>{v}</div>;
  return (
    <div className={`${box} w-[154px] bg-[#434e63] pl-[6px]`}>
      {k === 'color' && <span className="ml-[2px] mr-[9px] h-[8px] w-[8px] border border-black bg-[#0a24e6]" />}
      {k === 'ltype' && <span className="mr-[13px] h-px w-[30px] bg-[#dfe1e4]" />}
      {v}
      <Arrow />
    </div>
  );
};

const RightPanel = () => (
  <div className="flex w-[327px] shrink-0 flex-col bg-[#333d4c] font-['Noto_Sans',sans-serif]">
    <div className="flex h-[24px] shrink-0 bg-[#2b3441]">
      <div className="flex w-[49px] items-center justify-center bg-[#333d4c]">
        <svg width="18" height="18" viewBox="0 0 20 20">
          {stack}
          <circle cx="15" cy="16" r="3.500" fill="#eceef0" />
        </svg>
      </div>
      <div className="flex w-[50px] items-center justify-center border-r border-[#262e3a]">
        <svg width="16" height="16" viewBox="0 0 20 20">
          <path d="M2 9h8l8 4v5H2z" fill="#c9ccd1" />
          <path d="M6 2c-2 2 0 6 2 5s2-4 0-5" stroke={W} fill="none" />
        </svg>
      </div>
      <div className="flex w-[49px] items-center justify-center border-r border-[#262e3a]">
        <svg width="15" height="15" viewBox="0 0 20 20" fill="none">
          <rect x="2" y="1" width="16" height="18" fill="#c9ccd1" />
          <rect x="4" y="3" width="12" height="3" fill="#6f7378" />
          <path d="M4 9h12M4 12h12M4 15h12M8 7v10M12 7v10" stroke="#55585e" />
        </svg>
      </div>
      <div className="ml-auto flex w-[19px] items-center justify-center border-l border-[#262e3a] text-[10px] text-[#6f7986]">»</div>
    </div>

    <div className="flex h-[31px] shrink-0 items-start pl-[10px]">
      <span className="w-[53.600px] text-[12px] text-[#d5d8dc]">Layers</span>
      <div className="mt-[3px] flex">
        <LI>
          <circle cx="11" cy="4" r="2.500" fill={B} stroke="none" />
          {stackB}
        </LI>
        <LI>
          {stack}
          {pencil(15, 13)}
        </LI>
        <LI>
          {stack}
          <path d="M3 5h8m-3-3L4 5l4 3" stroke={B} />
        </LI>
        <LI>
          {stack}
          <path d="M14 8l3 3-5 6" stroke={B} />
        </LI>
        <LI>
          {stack}
          <path d="M10 17l7-7m-4 0h4v4" stroke="#eceef0" />
        </LI>
        <LI>
          {sheet}
          <circle cx="12" cy="14" r="4" fill="#63c9c9" stroke="none" />
        </LI>
        <LI>
          {sheet}
          <circle cx="13" cy="13" r="3.500" fill="#63c9c9" stroke="none" />
          <rect x="12" y="16" width="2" height="2" fill="#c9ccd1" stroke="none" />
        </LI>
        <LI>
          {sheet}
          <rect x="9" y="12" width="8" height="6" fill="#63c9c9" stroke="none" />
          <path d="M11 12V10a2 2 0 0 1 4 0v2" stroke="#63c9c9" />
        </LI>
        <LI>
          {sheet}
          <rect x="9" y="12" width="8" height="6" fill={Y} stroke="none" />
          <path d="M11 12V10a2 2 0 0 1 4 0" stroke={Y} />
        </LI>
      </div>
      <span className="ml-auto mr-[4px]">{pin}</span>
    </div>

    <div className="ml-[12px] flex h-[21px] w-[309px] shrink-0 items-center bg-[#434e63] text-[11px] leading-none text-[#eef0f2]">
      <span className="ml-[9px] h-[8px] w-[8px] rounded-full bg-[#c9ccd1]" />
      <span className="ml-[9px] h-[9px] w-[7px] rounded-[1px] bg-[#55606f]" />
      <span className="ml-[9px] h-[7px] w-[7px] rounded-full bg-[#55606f]" />
      <span className="ml-[9px] h-[8px] w-[8px] border border-black bg-[#0a24e6]" />
      <span className="ml-[7px] h-[7px] w-[9px] border border-[#5d6878]" />
      <span className="ml-[9px]">INDICACIONES</span>
      <Arrow />
    </div>
    <div className="ml-[12px] mt-[5px] flex h-[22px] w-[309px] shrink-0 items-center bg-[#434e63] pl-[5px] text-[11px] font-medium leading-none text-[#eef0f2]">
      Unsaved Layer State
      <Arrow />
    </div>
    <div className="flex h-[28px] shrink-0 items-center pl-[14px] text-[10.500px] leading-none text-[#a4abb4]">
      <span className="h-0 w-0 border-x-[4px] border-t-[7px] border-x-transparent border-t-[#77808c]" />
      <span className="ml-[11px]">Hide Layer List</span>
    </div>

    <div className="ml-[10px] flex h-[22px] w-[311px] shrink-0 items-center bg-[#2b3340] text-[11px] font-semibold leading-none text-[#d5d8dc]">
      <span className="flex w-[24px] justify-center">
        <svg width="12" height="8" viewBox="0 0 12 8">
          <path d="M0 4c3-5 9-5 12 0-3 5-9 5-12 0z" fill="#e2e4e7" />
          <circle cx="6" cy="4" r="1.800" fill="#2b3340" />
        </svg>
      </span>
      <div className="relative flex h-full w-[115px] items-center bg-[#3c4759]">
        <span className="ml-[3px] h-[8px] w-[8px] border border-[#d5d8dc] bg-[#9a9da2]" />
        <span className="ml-[7px]">Name</span>
        <span className="ml-auto mr-[6px] text-[8px] font-normal">↕</span>
        <span className="absolute bottom-0 left-[51px] h-0 w-0 border-x-[3px] border-b-[4px] border-x-transparent border-b-[#5db0ee]" />
      </div>
      <span className="ml-[6px] h-[8px] w-[8px] rounded-full bg-[#cfd2d6]" />
      <svg width="9" height="11" viewBox="0 0 9 11" className="ml-[12px]" fill="#cfd2d6">
        <rect x="0" y="5" width="9" height="6" />
        <path d="M2 5V3a2.500 2.500 0 0 1 5 0v2" fill="none" stroke="#cfd2d6" />
      </svg>
      <svg width="10" height="8" viewBox="0 0 10 8" className="ml-[32px]" stroke="#cfd2d6">
        <path d="M0 1h10M0 4h10M0 7h10" />
      </svg>
      <svg width="11" height="9" viewBox="0 0 11 9" className="ml-[30px]" stroke="#cfd2d6" fill="none">
        <path d="M1 8V1h5l1 2h3v5z" />
        <path d="M3 6h5" />
      </svg>
      <svg width="11" height="8" viewBox="0 0 11 8" className="ml-[21px]" stroke="#cfd2d6" fill="none">
        <path d="M1 2h9" strokeDasharray="1.500 1" />
        <path d="M1 6h9" />
      </svg>
      <span className="ml-auto mr-[1px] h-[8px] w-px bg-[#cfd2d6]" />
    </div>

    <div className="ml-[10px] h-[256px] w-[311px] shrink-0 bg-[#3d495c] text-[10.500px] leading-none text-[#e4e6e9]">
      {layers.map((r) => (
        <div key={r.n} className={`flex h-[17.900px] items-center ${r.sel ? 'bg-[#7a8ca3]' : ''}`}>
          <span className="flex w-[22px] justify-center">
            <span className={`h-[7px] w-[7px] rounded-full ${r.off ? 'border border-[#4c5667]' : 'bg-[#c9ccd1]'}`} />
          </span>
          <span className="ml-[2px] h-[8px] w-[8px] border border-black" style={{ backgroundColor: r.c }} />
          <span className="ml-[9px] w-[146px]">{r.n}</span>
          <span className="w-[82px]">{r.w}</span>
          {r.dash ? (
            <span className="flex w-[30px] items-center">
              <span className="h-px w-[20px] bg-[#e4e6e9]" />
              <span className="ml-[9px] h-px w-px bg-[#e4e6e9]" />
            </span>
          ) : (
            <span className="h-px w-[30px] bg-[#e4e6e9]" />
          )}
        </div>
      ))}
    </div>

    <div className="ml-[12px] mt-[5px] h-[5px] w-[108px] shrink-0 rounded-full bg-[#6b7582]" />
    <div className="flex h-[29px] shrink-0 items-center pl-[16px] pr-[11px]">
      <span className="flex w-[28px]">
        <svg width="16" height="16" viewBox="0 0 20 20">{stack}</svg>
      </span>
      <span className="flex w-[29px]">
        <svg width="16" height="16" viewBox="0 0 20 20" fill="none" stroke={W}>
          {stack}
          <rect x="10" y="11" width="9" height="7" fill="#333d4c" />
        </svg>
      </span>
      <span className="flex w-[28px]">
        <svg width="14" height="14" viewBox="0 0 20 20">
          <path d="M2 4h7l2 2h7l-2 11H2z" fill="#c9ccd1" />
        </svg>
      </span>
      <span className="flex w-[28px]">
        <svg width="14" height="14" viewBox="0 0 20 20">
          <path d="M2 4h7l2 2h7l-2 11H2z" fill="#8f949b" />
          <path d="M8 9h6v5H8z" fill="#333d4c" />
        </svg>
      </span>
      <span className="ml-auto h-px w-[8px] bg-[#6f7986]" />
      <svg width="11" height="9" viewBox="0 0 11 9" className="ml-[15px]" fill="none" stroke={W}>
        <path d="M.5.500h10v8H.5zM4 .500v8M7.500 .500v8" />
      </svg>
      <span className="ml-[2px] h-0 w-0 border-x-[3px] border-t-[4px] border-x-transparent border-t-[#c9ccd1]" />
    </div>
    <div className="ml-[10px] flex h-[18px] w-[310px] shrink-0 items-center rounded-[3px] bg-white pl-[5px] text-[11.500px] leading-none text-[#a8a8a8]">
      <svg width="14" height="12" viewBox="0 0 14 12" fill="none" stroke="#555555">
        <circle cx="5" cy="5" r="4" />
        <path d="M8 8l3 3" />
      </svg>
      <span className="ml-[6px]">Search for layer</span>
    </div>

    <div className="mt-[9px] flex h-[25px] shrink-0 items-start border-t border-[#262e3a] pl-[10px]">
      <span className="text-[11.500px] leading-[15px] text-[#d5d8dc]">Properties</span>
      <div className="ml-[155px] mt-[3px] flex h-[12px] w-[54px] text-[8.500px] font-semibold leading-none">
        <span className="flex flex-1 items-center justify-center bg-[#2b3340] text-[#667080]">All</span>
        <span className="flex flex-1 items-center justify-center bg-[#434e63] text-[#cfd2d6]">My</span>
      </div>
      <svg width="16" height="16" viewBox="0 0 20 20" className="ml-[9px]" fill="none" stroke={W}>
        <path d="M3 2h10v15H3zM5 6h6M5 9h6M5 12h3" />
        {pencil(14, 13)}
      </svg>
      <span className="ml-auto mr-[4px]">{pin}</span>
    </div>
    <div className="ml-[12px] flex h-[18px] w-[307px] shrink-0 items-center bg-[#3a4556] pl-[5px] text-[10.500px] leading-none text-[#6e7885]">
      Model Space
      <Arrow />
    </div>

    <div className="mt-[6px] flex flex-col text-[10.500px] leading-none">
      {propRows.map((p) => (
        <div key={p.l} className="flex h-[21.650px] items-center">
          <span className="w-[153px] whitespace-nowrap pr-0 text-right text-[#bcc1c7]">{p.l}</span>
          <span className="ml-[10px]">
            <PropValue v={p.v} k={p.k} />
          </span>
        </div>
      ))}
    </div>
  </div>
);

const LogoBadge = () => (
  <div className="absolute right-[25px] top-[949px] flex h-[104px] w-[104px] items-center justify-center rounded-full bg-white shadow-[0_0_6px_rgba(0,0,0,0.25)]">
    <svg width="52" height="36" viewBox="0 0 52 36">
      <path d="M11 0l15 17.500L40 0l11 17.500L38 35H13L0 17.500z" fill="#c00000" />
    </svg>
  </div>
);

export default function App() {
  return (
    <div className="relative flex h-[1080px] w-[1920px] flex-col overflow-hidden bg-[#333d4c] font-['Liberation_Sans',sans-serif]">
      <MenuBar />
      <TitleBar />
      <div className="flex min-h-0 flex-1">
        <LeftPanel />
        <div className="flex min-w-0 flex-1 flex-col">
          <div className="flex min-h-0 flex-1">
            <div className="flex min-w-0 flex-1 flex-col">
              <DocTabs />
              <div className="relative flex-1 bg-[#808080]">
                <PlanCanvas />
                <CommandLine />
              </div>
            </div>
            <RightPanel />
          </div>
          <StatusBar />
        </div>
      </div>
      <LogoBadge />
    </div>
  );
}
